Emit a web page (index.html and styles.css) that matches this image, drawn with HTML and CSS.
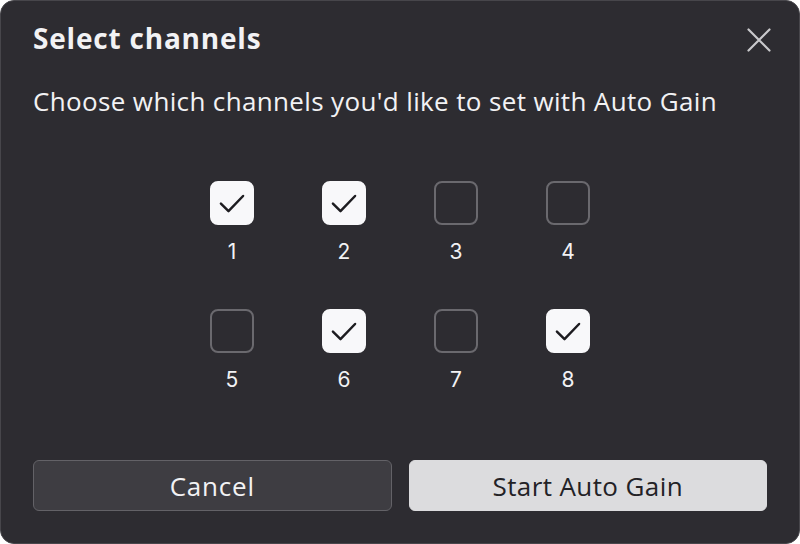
FILE: index.html
```html
<!DOCTYPE html>
<html>
<head>
<meta charset="utf-8">
<link rel="stylesheet" href="styles.css">
</head>
<body>
<div class="dialog">
  <div class="header">
    <h1 class="title">Select channels</h1>
    <button class="close" aria-label="Close">
      <svg width="24" height="24" viewBox="0 0 24 24"><path d="M1.5 1.5 L22.5 22.5 M22.5 1.5 L1.5 22.5" stroke="#c9c9cc" stroke-width="2.2" fill="none" stroke-linecap="round"/></svg>
    </button>
  </div>
  <p class="subtitle">Choose which channels you'd like to set with Auto Gain</p>
  <div class="grid">
    <div class="item"><span class="box on"><svg viewBox="0 0 24 24"><path d="M2.5 12.5 L9 19 L21.5 6" /></svg></span><span class="num">1</span></div>
    <div class="item"><span class="box on"><svg viewBox="0 0 24 24"><path d="M2.5 12.5 L9 19 L21.5 6" /></svg></span><span class="num">2</span></div>
    <div class="item"><span class="box"></span><span class="num">3</span></div>
    <div class="item"><span class="box"></span><span class="num">4</span></div>
    <div class="item"><span class="box"></span><span class="num">5</span></div>
    <div class="item"><span class="box on"><svg viewBox="0 0 24 24"><path d="M2.5 12.5 L9 19 L21.5 6" /></svg></span><span class="num">6</span></div>
    <div class="item"><span class="box"></span><span class="num">7</span></div>
    <div class="item"><span class="box on"><svg viewBox="0 0 24 24"><path d="M2.5 12.5 L9 19 L21.5 6" /></svg></span><span class="num">8</span></div>
  </div>
  <div class="actions">
    <button class="btn cancel">Cancel</button>
    <button class="btn primary">Start Auto Gain</button>
  </div>
</div>
</body>
</html>
```
FILE: styles.css
```css
html, body {
  margin: 0;
  padding: 0;
  background: #ffffff;
}
.dialog {
  box-sizing: border-box;
  width: 800px;
  height: 544px;
  background: #2d2c31;
  border: 1px solid #47464b;
  border-radius: 14px;
  display: flex;
  flex-direction: column;
  padding: 0 32px;
  font-family: "Open Sans", sans-serif;
  color: #f2f2f4;
}
.header {
  display: flex;
  align-items: center;
  justify-content: space-between;
  height: 74px;
}
.title {
  margin: 0;
  font-size: 28px;
  font-weight: 700;
  letter-spacing: 0.8px;
  line-height: 36px;
}
.close {
  background: none;
  border: none;
  padding: 0;
  margin-right: -4px;
  margin-top: 4px;
  width: 24px;
  height: 24px;
  display: flex;
}
.subtitle {
  margin: 8px 0 0;
  font-size: 26px;
  line-height: 36px;
  letter-spacing: 0.36px;
}
.grid {
  margin: 62px auto 0;
  display: grid;
  grid-template-columns: repeat(4, 44px);
  column-gap: 68px;
  row-gap: 44px;
}
.item {
  display: flex;
  flex-direction: column;
  align-items: center;
}
.box {
  box-sizing: border-box;
  width: 44px;
  height: 44px;
  border: 2px solid #6a696e;
  border-radius: 8px;
  display: flex;
  align-items: center;
  justify-content: center;
}
.box.on {
  background: #f8f8fa;
  border-color: #f8f8fa;
}
.box svg {
  width: 28px;
  height: 28px;
  fill: none;
  stroke: #1d1c20;
  stroke-width: 2.1;
  stroke-linecap: round;
  stroke-linejoin: round;
}
.num {
  margin-top: 14px;
  font-family: Inter, Roboto, sans-serif;
  font-size: 21px;
  line-height: 26px;
  color: #f2f2f4;
}
.actions {
  margin-top: auto;
  margin-bottom: 32px;
  display: flex;
  gap: 17px;
}
.btn {
  flex: 1;
  height: 51px;
  border-radius: 6px;
  font-family: "Open Sans", sans-serif;
  font-size: 26px;
  letter-spacing: 0.4px;
  padding: 0;
}
.cancel {
  background: #3e3d42;
  border: 1px solid #636267;
  color: #f2f2f4;
  letter-spacing: 0.8px;
}
.primary {
  background: #dcdcde;
  border: 1px solid #dcdcde;
  color: #232226;
}
```
